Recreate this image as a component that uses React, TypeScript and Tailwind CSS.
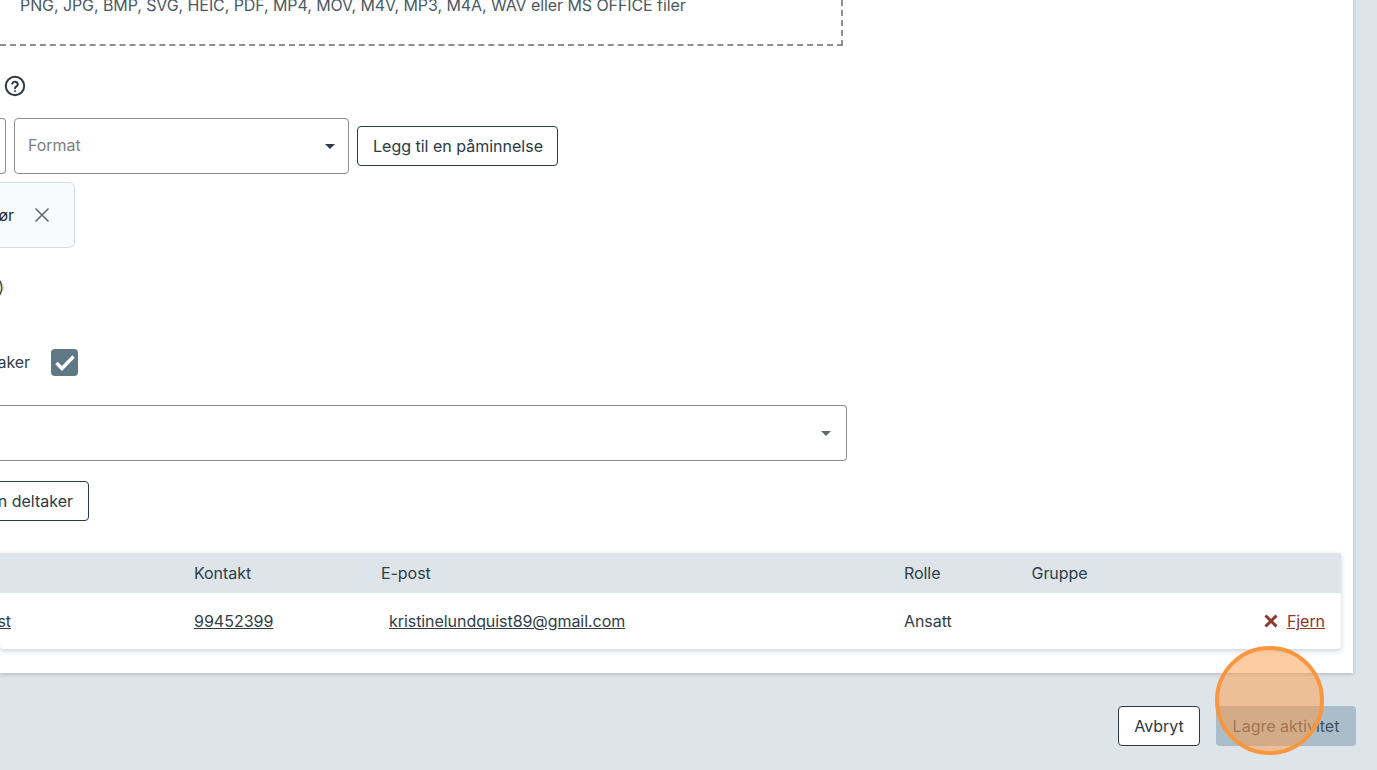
import React from "react";

function Caret({ className }: { className: string }) {
  return (
    <svg width="10" height="5" viewBox="0 0 10 5" className={className}>
      <path d="M0 0h10L5 5z" fill="currentColor" />
    </svg>
  );
}

function Outline({ children, className = "" }: { children: React.ReactNode; className?: string }) {
  return (
    <button className={`h-10 shrink-0 rounded-[4px] border border-[#2b3a44] bg-white px-[15px] text-[16px] leading-none tracking-[0px] whitespace-nowrap text-[#2b3a44] ${className}`}>
      {children}
    </button>
  );
}

export default function App() {
  return (
    <div
      className="relative h-[770px] w-[1377px] overflow-hidden bg-[#dde5eb] text-[16px] tracking-[-0.06px] text-[#2f3d46]"
      style={{ fontFamily: "Inter, 'Liberation Sans', sans-serif" }}
    >
      <div className="mr-[24px] h-[683px] bg-white shadow-[0_1px_4px_rgba(60,80,95,0.3)]">
        {/* Upload area */}
        <div className="-mt-[10px] flex h-[56px] w-[843px] flex-col border-r-2 border-b-2 border-dashed border-[#8f8f8f] pt-[5px] pl-[20px]">
          <span className="whitespace-nowrap text-[16px] leading-[20px] tracking-[-0.08px] text-[#4c5962]">
            PNG, JPG, BMP, SVG, HEIC, PDF, MP4, MOV, M4V, MP3, M4A, WAV eller MS OFFICE filer
          </span>
        </div>

        {/* Reminder heading */}
        <div className="flex h-[60px] items-center pl-[4px] pt-[20px]">
          <svg width="22" height="22" viewBox="0 0 22 22" fill="none" stroke="#2b3a44" strokeWidth="2">
            <circle cx="11" cy="11" r="9.2" />
            <path d="M8.2 8.6a2.9 2.9 0 0 1 5.6.8c0 1.8-2.8 2.1-2.8 3.9" strokeLinecap="round" />
            <circle cx="11" cy="16" r="0.6" fill="#2b3a44" strokeWidth="0.8" />
          </svg>
        </div>

        {/* Reminder inputs */}
        <div className="mt-[12px] flex h-[56px] items-center">
          <div className="h-full w-[6px] rounded-r-[4px] border-y border-r border-[#8a8f93]" />
          <div className="ml-[8px] flex h-full w-[335px] items-center justify-between rounded-[4px] border border-[#8a8f93] pr-[13px] pl-[13px]">
            <span className="pb-[2px] text-[#7b7f82]">Format</span>
            <Caret className="text-[#2b3a44]" />
          </div>
          <Outline className="ml-[8px] w-[201px]">Legg til en påminnelse</Outline>
        </div>

        {/* Chip */}
        <div className="mt-[8px] flex h-[66px] w-[75px] items-center justify-end overflow-visible rounded-r-[6px] border-y border-r border-[#d5dee4] bg-[#f7fbfe] pr-[24px]">
          <span className="mr-[20px] whitespace-nowrap text-[#1f2a31]">Ansvarlig utfør</span>
          <svg width="16" height="16" viewBox="0 0 16 16" stroke="#5f6b73" strokeWidth="1.6" className="shrink-0">
            <path d="M1.5 1.5l13 13M14.5 1.5l-13 13" />
          </svg>
        </div>

        {/* Participants heading */}
        <div className="flex h-[78px] w-[4px] items-center justify-end">
          <span className="whitespace-nowrap leading-[20px]">Deltakere (0)</span>
        </div>

        {/* Checkbox */}
        <div className="mt-[23px] flex h-[27px] w-[78px] items-center justify-end">
          <span className="mr-[21px] pb-[1px] whitespace-nowrap">Legg til deltaker</span>
          <span className="flex h-[27px] w-[27px] shrink-0 items-center justify-center rounded-[4px] bg-[#5e7886]">
            <svg width="20" height="16" viewBox="0 0 20 16" fill="none" stroke="#fff" strokeWidth="3.4">
              <path d="M1.5 8l5.5 5.5L18.5 1.5" />
            </svg>
          </span>
        </div>

        {/* Participant select */}
        <div className="mt-[29px] flex h-[56px] w-[847px] items-center justify-end rounded-r-[4px] border-y border-r border-[#8a8f93] pr-[15px]">
          <Caret className="text-[#5f6b73]" />
        </div>

        {/* Add participant */}
        <div className="mt-[20px] flex h-[40px] w-[89px] justify-end">
          <Outline>Legg til en deltaker</Outline>
        </div>

        {/* Table */}
        <div className="mt-[32px] mr-[12px] rounded-b-[4px] bg-white shadow-[0_2px_5px_rgba(60,80,95,0.25)]">
          <div className="flex h-[40px] items-center bg-[#dde5eb]">
            <span className="w-[194px]" />
            <span className="w-[187px]">Kontakt</span>
            <span className="w-[523px]">E-post</span>
            <span className="w-[128px]">Rolle</span>
            <span className="-ml-[0.5px]">Gruppe</span>
          </div>
          <div className="flex h-[56px] items-center">
            <span className="flex w-[194px] justify-end pr-[183px]">
              <a className="whitespace-nowrap underline">Kristine Lundquist</a>
            </span>
            <a className="w-[195px] tracking-[0px] underline">
              <span>99452399</span>
            </a>
            <a className="w-[515px] underline">kristinelundquist89@gmail.com</a>
            <span className="w-[128px]">Ansatt</span>
            <span className="flex flex-1 items-center justify-end pr-[16px] text-[#8e352c]">
              <svg width="14" height="14" viewBox="0 0 14 14" stroke="currentColor" strokeWidth="3" className="mr-[9px]">
                <path d="M1.5 1.5l11 11M12.5 1.5l-11 11" />
              </svg>
              <a className="underline">Fjern</a>
            </span>
          </div>
        </div>
      </div>

      {/* Footer actions */}
      <div className="mt-[33px] mr-[21px] flex justify-end gap-[16px]">
        <Outline className="w-[82px]">Avbryt</Outline>
        <button className="h-10 w-[140px] rounded-[4px] bg-[#aabdc8] text-[16px] leading-none tracking-[0px] text-[#43545f]">
          Lagre aktivitet
        </button>
      </div>

      {/* Click highlight */}
      <div className="absolute top-[646px] left-[1215px] h-[109px] w-[109px] rounded-full border-[4px] border-[#f8973f] bg-[#fb9a45]/50" />
    </div>
  );
}
